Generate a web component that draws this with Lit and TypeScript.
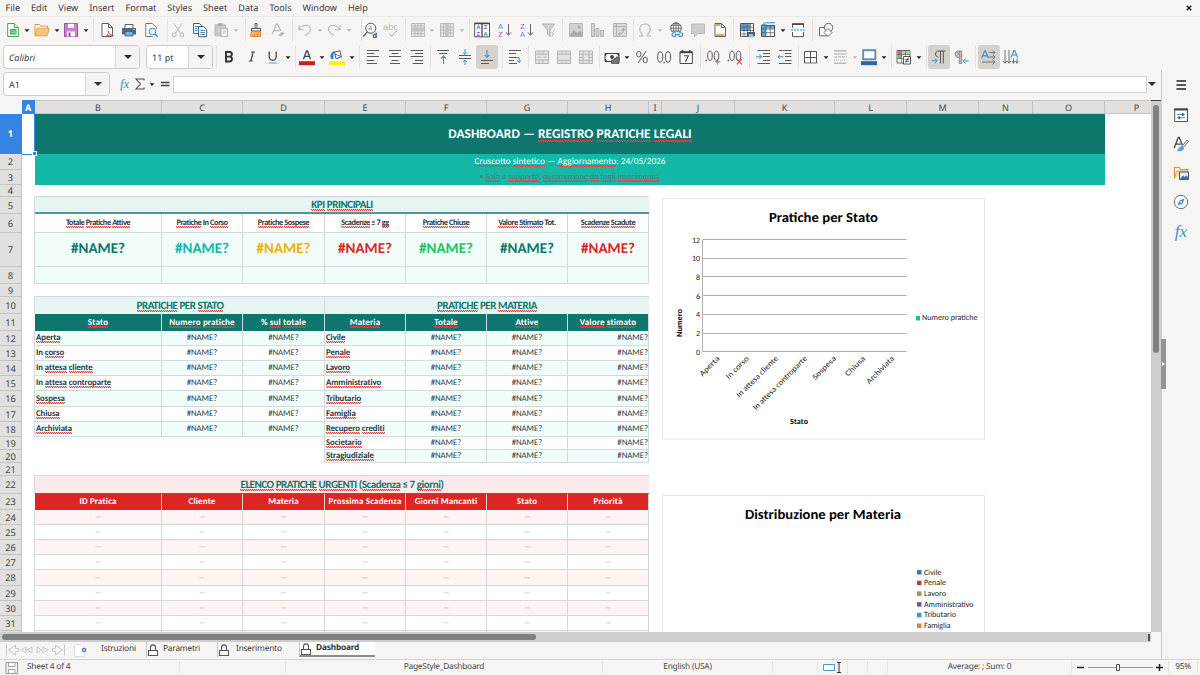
import { html, svg, css, LitElement, TemplateResult } from 'lit';
import { customElement, property } from 'lit/decorators.js';
import { classMap } from 'lit/directives/class-map.js';

const INK = '#5a5a5a';
const DIM = '#b9b9b9';
const BLUE = '#3b8fd1';

// All icons are drawn on a 16x16 box
const ICONS: Record<string, unknown> = {
  caret: svg`<path d="M5.6 7.2h4.8L8 10z" fill="#222"/>`,
  caretdim: svg`<path d="M5.8 7.2h4.4L8 9.8z" fill="#b5b5b5"/>`,
  new: svg`<path d="M2.7 1.5h6.6l4 4v9H2.7z" fill="#fff" stroke="#3fa65c"/><path d="M9.3 1.5v4h4" fill="#d6f0dc" stroke="#3fa65c"/><path d="M5 7h6.5v5.5H5z" fill="#3fa65c"/><path d="M5.5 9h5.5M5.5 10.8h5.5" stroke="#dff3e4" stroke-width=".7"/>`,
  open: svg`<path d="M1 13.5v-11h4.5l1.3 1.6h6.7v2" fill="#fff" stroke="#e0973b"/><path d="M3 6.2h12.3l-2 7.6H1z" fill="#f9c581" stroke="#e9a04a"/>`,
  save: svg`<path d="M1.5 1.5h13v13h-13z" fill="#c983cf" stroke="#a04fb0"/><path d="M4.5 1.5h7v5h-7z" fill="#fff" stroke="#a04fb0" stroke-width=".6"/><path d="M4 9.5h8v5H4z" fill="#fff"/><path d="M5.5 10.5h2v4h-2z" fill="#8d4a99"/>`,
  pdf: svg`<path d="M3 1.5h6.5l4 4v9H3z" fill="#fff" stroke="#5f5f5f"/><path d="M9.5 1.5v4h4" fill="none" stroke="#5f5f5f"/><path d="M6.5 15c2.6-2 3.4-4.5 2.9-6.2M9 9c.6 2.6 2.4 4.2 5.6 4.4M6.5 14.8c2-1.6 5-2 8-1.3" fill="none" stroke="#e0484a" stroke-width=".9"/>`,
  print: svg`<path d="M4 2.5h8v4H4z" fill="#fff" stroke="#5f5f5f"/><path d="M1 6h14v6.5H1z" fill="#5b6770"/><path d="M4 9.5h8v4.5H4z" fill="#65b5ea" stroke="#3a5f78" stroke-width=".8"/><path d="M12.5 7.5h1.2" stroke="#fff"/>`,
  preview: svg`<path d="M13.3 7V5.5l-4-4H2.8v13h7" fill="#fff" stroke="#777"/><circle cx="9.5" cy="9.5" r="3.4" fill="#dff0fb" stroke="${BLUE}"/><path d="M12 12l2.7 2.7" stroke="${BLUE}" stroke-width="1.5"/>`,
  cut: svg`<path d="M4 1.5l6.6 10M12 1.5l-6.6 10" stroke="${DIM}" fill="none"/><circle cx="4.2" cy="12.8" r="1.9" fill="none" stroke="${DIM}"/><circle cx="11.8" cy="12.8" r="1.9" fill="none" stroke="${DIM}"/>`,
  copy: svg`<path d="M1.6 1.5h6l2 2v8h-8z" fill="#fff" stroke="#555"/><path d="M6.6 4.5h5l3 3v7.2h-8z" fill="#fff" stroke="#555"/><path d="M3 4.5h3M3 6.5h2.5M3 8.5h2.5M8.3 8.5h4.5M8.3 10.5h4.5M8.3 12.5h4.5" stroke="${BLUE}"/>`,
  paste: svg`<path d="M2 2.8h10.5v11H2z" fill="#c9c9c9" stroke="#b5b5b5"/><path d="M5 1.2h4.5v2.6H5z" fill="#aaa"/><path d="M8 6.5h6.5v8H8z" fill="#f6f6f6" stroke="#b5b5b5"/><path d="M9.3 9h4M9.3 11h4" stroke="#c5c5c5"/>`,
  brush: svg`<path d="M7 1.5h2v5H7z" fill="#fff" stroke="#555"/><path d="M3.5 6.5h9V9h-9z" fill="#fff" stroke="#555"/><path d="M3.5 9.5h9v5h-10z" fill="#f6b26b" stroke="#e0883a"/><path d="M6.5 12v2.5M9.5 12v2.5" stroke="#c9702a" stroke-width=".7"/>`,
  clear: svg`<path d="M2 12.5L6.5 2h1L11 9M3.8 8.7h6" fill="none" stroke="${DIM}" stroke-width="1.2"/><path d="M8 13.5l4.2-4 2.3 2-3.8 3z" fill="#b8b8b8"/>`,
  undo: svg`<path d="M2 3.2v4.6h4.8M2.2 7.5C4.5 3.4 9.5 2 12.3 4.6c2.6 2.6.8 6.2-4.3 9" fill="none" stroke="${DIM}" stroke-width="1.1"/>`,
  redo: svg`<path d="M14 3.2v4.6H9.2M13.8 7.5C11.5 3.4 6.5 2 3.7 4.6c-2.6 2.6-.8 6.2 4.3 9" fill="none" stroke="${DIM}" stroke-width="1.1"/>`,
  find: svg`<circle cx="8.8" cy="6.2" r="5" fill="#fff" stroke="#555"/><path d="M5.3 9.8L1.2 14.6" stroke="#555" stroke-width="1.3"/><text x="6.2" y="8.2" font-size="7" fill="${BLUE}">a</text><text x="10.4" y="15.8" font-size="7.5" fill="#333" font-weight="600">d</text>`,
  spell: svg`<text x="0" y="8" font-size="9" fill="${DIM}" textLength="15">abc</text><path d="M6.5 11.8l2.3 2.4L14 8.6" fill="none" stroke="${DIM}" stroke-width="1.1"/>`,
  rowi: svg`<path d="M1.5 1.5h13v13h-13z" fill="#e8e8e8" stroke="#bababa"/><path d="M1.5 4h13M1.5 11.5h13M5 1.5v13M8 1.5v13M11 1.5v13" stroke="#bababa"/><path d="M2 5.5h12v4H2z" fill="#c4c4c4"/>`,
  coli: svg`<path d="M1.5 1.5h13v13h-13z" fill="#e8e8e8" stroke="#bababa"/><path d="M1.5 5h13M1.5 8h13M1.5 11h13M4.5 1.5v13M11.5 1.5v13" stroke="#bababa"/><path d="M6 2h4v12H6z" fill="#c4c4c4"/>`,
  sort: svg`<path d="M.7 1h14.8v13.8H.7z" fill="#fff" stroke="#555"/><path d="M.5 1.6h15M8 1v14" stroke="#444" stroke-width="1.3"/><g font-size="5.8" font-weight="700"><text x="2.2" y="7.4" fill="${BLUE}">A</text><text x="2.4" y="14.2" fill="#a24fb5">Z</text><text x="9.8" y="7.4" fill="#a24fb5">Z</text><text x="9.6" y="14.2" fill="${BLUE}">A</text></g>`,
  asc: svg`<g font-size="7.2"><text x="1" y="6.600" fill="${BLUE}">A</text><text x="1.200" y="15.200" fill="#a24fb5">Z</text></g><path d="M11.500 2v11M9 10.300l2.500 3 2.500-3" fill="none" stroke="#666"/>`,
  desc: svg`<g font-size="7.200"><text x="1.200" y="6.600" fill="#a24fb5">Z</text><text x="1" y="15.200" fill="${BLUE}">A</text></g><path d="M11.500 2v11M9 10.300l2.500 3 2.500-3" fill="none" stroke="#666"/>`,
  filter: svg`<path d="M1.2 2h12.6L9.2 8v6.5L6.5 12V8z" fill="#cfcfcf" stroke="#b5b5b5"/><path d="M14 7l-3.2 4.2h2L11 14.6" stroke="#bbb" fill="none"/>`,
  image: svg`<path d="M1.5 1.5h13v13h-13z" fill="#d3d3d3" stroke="#b5b5b5"/><path d="M2 13l4-5 3 3 3-2.5L14 11v3H2z" fill="#aaa"/><circle cx="11" cy="5" r="1.4" fill="#aaa"/>`,
  chart: svg`<path d="M2.5 1.5h3v13h-3zM7 6.5h3v8H7zM11.5 8.5h3v6h-3z" fill="#d3d3d3" stroke="#b5b5b5"/>`,
  pivot: svg`<path d="M1.5 1.5h13v13h-13z" fill="#dadada" stroke="#b5b5b5"/><path d="M1.5 4.5h13M4.5 1.5v13" stroke="#b5b5b5"/><path d="M6.5 12c4 0 5-2 5-5M9.5 8.5l2-2 2 2M8.3 10l-2 2 2 2" fill="none" stroke="#a5a5a5"/>`,
  omega: svg`<path d="M2 14h3.8c-.2-1.8-3-3.2-3-6.6C2.8 4 5 2 8 2s5.2 2 5.2 5.4c0 3.4-2.8 4.8-3 6.6H14" fill="none" stroke="#b5b5b5" stroke-width="1.1"/>`,
  link: svg`<circle cx="8" cy="6.2" r="5.3" fill="#fff" stroke="#555"/><path d="M2.7 6.2h10.6M8 1v10M3.7 3.3h8.6M3.7 9h8.6" stroke="#555" stroke-width=".8"/><ellipse cx="8" cy="6.2" rx="2.6" ry="5.3" fill="none" stroke="#555" stroke-width=".8"/><path d="M3 10h11v5H3z" fill="#f6f5f4"/><path d="M8 10.8H5.8a1.8 1.8 0 000 3.6H8M10.6 10.8h2.4a1.8 1.8 0 010 3.6h-2.4M6.8 12.6h5" fill="none" stroke="${BLUE}" stroke-width="1.1"/>`,
  comment: svg`<path d="M1.5 2h13v9.5H8l-3.5 3v-3h-3z" fill="#cdcdcd" stroke="#b9b9b9"/>`,
  headers: svg`<path d="M3 1.5h6.5l4 4v9H3z" fill="#fff" stroke="#666"/><path d="M9.5 1.5v4h4" fill="none" stroke="#666"/><path d="M4 3h4.5M4 13h8.5" stroke="#eda247" stroke-width="2"/>`,
  printarea: svg`<path d="M1.5 1.5h13v13h-13z" fill="#fff" stroke="#555"/><path d="M2 2h9v7H2z" fill="#58a7de"/><path d="M1.5 5h13M1.5 8.5h13M1.5 12h13M5 1.5v13M8.3 1.5v13M11.5 1.5v13" stroke="#555" stroke-width=".7"/><path d="M8 10h8v4H8z" fill="#4f5b64"/><path d="M9.8 12h4.4v3.3H9.8z" fill="#8ac8f0"/>`,
  freeze: svg`<path d="M1.5 3.5h13v11h-13z" fill="#fff" stroke="#555"/><path d="M2 4h12v2.5H2zM2 4h4v10H2z" fill="#58a7de"/><path d="M1.5 7h13M1.5 10.7h13M6 3v11.5M10.3 3v11.5" stroke="#555" stroke-width=".7"/><path d="M4 .3v5M1.3 2.8h5.2M5 .8h10" stroke="${BLUE}" stroke-width="1"/>`,
  split: svg`<path d="M2.5 5.8V1.8h11v4M2.5 10v4.6h11V10" fill="#fff" stroke="#555"/><path d="M2 2.2h12" stroke="#444" stroke-width="1.5"/><path d="M1 8h14" stroke="${BLUE}" stroke-dasharray="2 1"/>`,
  shapes: svg`<path d="M1.5 5.5h8v8.3h-8z" fill="#fff" stroke="#666"/><circle cx="10.5" cy="5.6" r="4.2" fill="#f6f5f4" stroke="#666"/><path d="M10 6.5l4 4-4 4-4-4z" fill="#fff" stroke="#666"/>`,
  bold: svg`<path d="M5 3h3.600a2.300 2.300 0 010 4.600H5zM5 7.600h4a2.500 2.500 0 010 4.900H5z" fill="none" stroke="#333" stroke-width="1.900"/>`,
  italic: svg`<path d="M7 3h4M4.8 12h4M9.2 3L6.8 12" stroke="#444" stroke-width="1.2" fill="none"/>`,
  underline: svg`<path d="M4.2 2.5v5.3c0 4.6 7 4.6 7 0V2.5" stroke="#4d4d4d" stroke-width="1.3" fill="none"/><path d="M3.5 14h8.8" stroke="#6db1e3" stroke-width="1.2"/>`,
  fontcolor: svg`<path d="M4.500 10.300L7.500 2h1l3 8.300M5.600 7.300h4.800" fill="none" stroke="#444" stroke-width="1.300"/><path d="M0 12.2h16v4H0z" fill="#c5221b"/>`,
  hilite: svg`<path d="M0 12.2h16v4H0z" fill="#fff200"/><path d="M5.5 3.2l5.5-1.5 1.3 6-5.2 2.2z" fill="#fff" stroke="#555"/><path d="M6 5l7 3" stroke="#555" stroke-width=".8"/><path d="M2.6 9.5c-1-3 .2-6 3-6.5M3.5 10V4" stroke="#2a7fc4" stroke-width="1.8" fill="none"/>`,
  left: svg`<path d="M1.8 1.5H14M1.8 4.500h7.5M1.8 7.500H14M1.8 11.500h7.5M1.8 14.5H12" stroke="${INK}"/>`,
  center: svg`<path d="M2 1.5h12M4.5 4.500h7M2 7.500h12M4.5 11.500h7M3 14.5h10" stroke="${INK}"/>`,
  right: svg`<path d="M1.5 1.5H14M6 4.500h8M1.5 7.500H14M6 11.500h8M3.5 14.5H14" stroke="${INK}"/>`,
  top: svg`<path d="M2 1.5h12M4 4.5h8" stroke="${INK}"/><path d="M8.5 15V7M6 9.5L8.5 7 11 9.5" stroke="${BLUE}" fill="none" stroke-width="1.1"/>`,
  middle: svg`<path d="M2 6.500h12M2 9.5h12" stroke="${INK}"/><path d="M8 0v5.3M5.8 3.2L8 5.4l2.2-2.2M8 16v-5M5.8 13L8 10.9l2.2 2.1" stroke="${BLUE}" fill="none"/>`,
  bottom: svg`<path d="M2 11.5h12M2 14.5h8" stroke="${INK}"/><path d="M8 1v7M5.6 5.8L8 8.2l2.4-2.4" stroke="${BLUE}" fill="none" stroke-width="1.1"/>`,
  wrap: svg`<path d="M2 1.500h12M2 4.500h7M2 8.500h8.5M2 11.500h5M2 14.500h8" stroke="${INK}"/><path d="M8.5 8.6h3.6v4.6M10 11.3l2.1 2.2 2.3-2.2" stroke="${BLUE}" fill="none"/>`,
  merge1: svg`<path d="M1.5 2h13v12.5h-13z" fill="#e4e4e4" stroke="#b5b5b5"/><path d="M1.5 5.2h13M1.5 11h13M5 2v3M9 2v3M5 11v3.5M9 11v3.5M3.5 8.2h3.2M9.5 8.2h3.2" stroke="#b5b5b5"/>`,
  merge2: svg`<path d="M1.5 2h13v12.5h-13z" fill="#e4e4e4" stroke="#b5b5b5"/><path d="M1.5 5.2h13M1.5 11.3h13M6 2v3M10 2v3M6 11v3.5M10 11v3.5" stroke="#b5b5b5"/>`,
  merge3: svg`<path d="M1.5 2h13v12.5h-13z" fill="#e4e4e4" stroke="#b5b5b5"/><path d="M1.5 5.2h13M1.5 8.5h3.5M11 8.5h3.5M1.5 11.5h13M5 2v12.5M11 2v12.5" stroke="#b5b5b5"/>`,
  currency: svg`<path d="M1 4.5h14v8H1z" fill="#fff" stroke="#444"/><path d="M1 4.5h3l-3 3zM15 4.5v3l-3-3zM1 9.5v3h3z" fill="#444"/><circle cx="8" cy="8" r="2" fill="#444"/><path d="M7.5 11h2.5V9.5H12V8h3v6.5H7.5z" fill="#777" stroke="#444" stroke-width=".7"/>`,
  percent: svg`<ellipse cx="4.8" cy="5.2" rx="2.2" ry="2.8" fill="none" stroke="${INK}"/><ellipse cx="11.2" cy="11" rx="2.2" ry="2.8" fill="none" stroke="${INK}"/><path d="M12 2.2L4 14" stroke="${INK}"/>`,
  number: svg`<ellipse cx="4.2" cy="8" rx="2.6" ry="5.2" fill="none" stroke="${INK}"/><ellipse cx="12" cy="8" rx="2.6" ry="5.2" fill="none" stroke="${INK}"/><path d="M7.5 13.6h1.3" stroke="${INK}" stroke-width="1.3"/>`,
  date: svg`<path d="M2 2.8h12.3v11.7H2z" fill="#fff" stroke="#444"/><path d="M2 3.4h12.3M4.5 1v3M11.8 1v3" stroke="#444" stroke-width="1.6"/><path d="M5.8 6.7h4.6L7.4 13" stroke="#444" fill="none" stroke-width="1.1"/>`,
  adddec: svg`<ellipse cx="5" cy="6.8" rx="2.3" ry="4.7" fill="none" stroke="${INK}"/><ellipse cx="11.5" cy="6.8" rx="2.3" ry="4.7" fill="none" stroke="${INK}"/><path d="M.7 11.5h1.3" stroke="${INK}" stroke-width="1.3"/><path d="M12.5 10v5.5M9.8 12.8h5.4" stroke="${BLUE}" stroke-width="1.1"/>`,
  deldec: svg`<ellipse cx="5" cy="6.8" rx="2.3" ry="4.7" fill="none" stroke="${INK}"/><ellipse cx="11.5" cy="6.8" rx="2.3" ry="4.7" fill="none" stroke="${INK}"/><path d="M.7 11.5h1.3" stroke="${INK}" stroke-width="1.3"/><path d="M9.8 10.2l5.2 5.2M15 10.2l-5.2 5.2" stroke="#e0484a" stroke-width="1.1"/>`,
  indent: svg`<path d="M2.5 1.500H15M8 4.5h7M8 7.500h7M8 11.500h7M2.5 14.500H15" stroke="${INK}"/><path d="M1 7.8h5.5M4.3 5.6l2.3 2.2L4.3 10" stroke="${BLUE}" fill="none"/>`,
  outdent: svg`<path d="M2 1.500h12.5M8 4.5h6.5M8 7.500h6.5M8 11.500h6.5M2 14.500h12.5" stroke="${INK}"/><path d="M.8 7.8H6.5M3 5.6L.8 7.8 3 10" stroke="${BLUE}" fill="none"/>`,
  border: svg`<path d="M2.5 2.5h12v11.5h-12z" fill="#fff" stroke="#555"/><path d="M8.5 2.5v11.500M2.5 8.500h12" stroke="#555"/><path d="M2 14.500h13" stroke="#edb15f"/>`,
  linestyle: svg`<path d="M2 1.800h12.500M2 5h12.500" stroke="#aaa" stroke-width="1.200"/><path d="M2 8h12.500" stroke="#aaa" stroke-width="1.200" stroke-dasharray="3 1"/><path d="M2 11.200h12.500" stroke="#aaa" stroke-dasharray="1 1"/><path d="M2 14.200h12.500" stroke="#bbb" stroke-width="1.500"/>`,
  bordercolor: svg`<path d="M2.500 1.500h11.500v8.500H2.500z" fill="#fff" stroke="#58a7de" stroke-width="1.400"/><path d="M1.800 .8h13v10h-13z" fill="none" stroke="#555" stroke-width=".7"/><path d="M0 12.200h16v4H0z" fill="#2b66a4"/>`,
  cond: svg`<path d="M1 1.500h13v12.500H1z" fill="#fff" stroke="#666"/><path d="M1.500 2h4v4h-4z" fill="#e06464"/><path d="M1.500 6h4v4h-4z" fill="#6abf6e"/><path d="M5.500 2h8v4h-8z" fill="#9edba1"/><path d="M1 5.500h13M1 9.500h13M5.500 1.500v12.500M9.500 1.500v12.500" stroke="#666" stroke-width=".7"/><path d="M7.500 7.500h7v7.500h-7z" fill="#fff" stroke="#555"/><path d="M9 10.300h4M9 12.300h4M12.300 8.800l-2.500 5" stroke="#444" stroke-width=".8"/>`,
  ltr: svg`<path d="M7.500 8C3.500 8 3.500 2 7.500 2H14.500M9.500 2v12.500M12.300 2v12.500" stroke="#555" fill="none"/><path d="M.8 11.800h5M3.800 9.500l2.300 2.300-2.300 2.300" stroke="${BLUE}" fill="none"/>`,
  rtl: svg`<path d="M5.500 8.500C1 8.500 1 2 5.500 2h3.200v12.500H6.300V2" fill="#bbb" stroke="#777" stroke-width=".8"/><path d="M15.500 12h-5M12.500 9.700L10.200 12l2.300 2.300" stroke="${BLUE}" fill="none"/>`,
  ttb: svg`<path d="M.6 9.300L3.700 1.800h.7l3.100 7.500M1.800 6.800h4.500" fill="none" stroke="${BLUE}" stroke-width="1.200"/><path d="M8.300 3.500h5.500M8.300 8h5.500M1 13h13M12 1.500l2 2-2 2M12 6l2 2-2 2M11.500 10.500l2.500 2.500-2.500 2.500" stroke="#666" stroke-width=".9" fill="none"/>`,
  vert: svg`<path d="M2 1v13M6 1v13M10.500 9.500v4.500M.2 12l1.800 2.300L3.800 12M4.200 12L6 14.300 7.800 12M9 12l1.500 2.300 1.500-2.300M14 9.500v4.500M12.500 12l1.500 2.300 1.500-2.300" stroke="#666" stroke-width=".9" fill="none"/><path d="M8 8.500L11 1.500h.7l3 7M9 6h4.500" fill="none" stroke="${BLUE}" stroke-width="1.200"/>`,
  menu: svg`<path d="M3.500 4h9.500M3.500 8h9.500M3.500 12h9.500" stroke="#222" stroke-width="1.400"/>`,
  props: svg`<path d="M1.700 2h12.800v12.500H1.700z" fill="#fff" stroke="#555"/><path d="M1.200 2.500h13.800" stroke="#444" stroke-width="2"/><path d="M4 7.500h8M4 10.800h8" stroke="${BLUE}"/><path d="M9.800 6v3M6.200 9.300v3" stroke="#444" stroke-width="1.300"/>`,
  styles: svg`<path d="M1.200 12L5.300 1.500h1L9.300 9M2.800 8.200h5" fill="none" stroke="#444" stroke-width="1.300"/><path d="M9 10.500l5-6.500 1.500 1.300-5 6z" fill="#fff" stroke="#555" stroke-width=".8"/><path d="M4.500 14.500c1-1 1.500-3.500 4-4 2 1 2.500 2.300 1 3.500-1.500 1-3.500 1-5 .5z" fill="#58a7de" stroke="#2a7fc4" stroke-width=".6"/>`,
  gallery: svg`<path d="M1.500 13.500v-11h4.800l1.400 2h7v3" fill="#fff" stroke="#e28a2d" stroke-width="1.200"/><path d="M1.500 13.500l2-7.500h11" fill="#fbd9ad" stroke="#e9a04a"/><path d="M6.500 7h9v7.500h-9z" fill="#dceefa" stroke="#555"/><path d="M7 14l3-3.500 2 1.500 1.500-1.500L15 12v2z" fill="#3178b4"/>`,
  compass: svg`<circle cx="8" cy="8" r="6.700" fill="#fff" stroke="#5c6f7c"/><path d="M11.500 4.500l-2 5.200-5 1.800 2-5z" fill="${BLUE}"/><circle cx="8" cy="8" r=".9" fill="#fff"/>`,
  sum: svg`<path d="M12 4.500V3H4l4.500 5L4 13h8v-1.500" fill="none" stroke="#4d4d4d" stroke-width="1.100"/>`,
  equals: svg`<path d="M4 6.500h8.500M4 9.500h8.500" stroke="#444" stroke-width="1.300"/>`,
  lock: svg`<path d="M3.500 8.500h9v5h-9z" fill="#fff" stroke="#555" stroke-width="1.100"/><path d="M5.500 8.500V5.500c0-3.500 5-3.500 5 0v3" fill="none" stroke="#555" stroke-width="1.100"/>`,
  addsheet: svg`<path d="M1.500 2.500h7l3 3v9h-10z" fill="#fff" stroke="#ddd"/><circle cx="11" cy="8" r="2.300" fill="#3b6fc0"/><path d="M11 6.700v2.600M9.700 8h2.600" stroke="#fff" stroke-width=".8"/>`,
  disk: svg`<path d="M2 2.500h11.500v11H2z" fill="#f6f5f4" stroke="#999"/><path d="M4.500 2.500h6.500v4H4.500zM4.500 9.500h6.500v4H4.500z" fill="#fff" stroke="#999" stroke-width=".9"/>`,
};

@customElement('calc-icon')
export class CalcIcon extends LitElement {
  @property() name = '';

  static styles = css`
    :host {
      display: inline-block;
      flex: none;
      width: 16px;
      height: 16px;
    }
    svg {
      display: block;
      overflow: visible;
      font-family: 'Liberation Sans', sans-serif;
    }
  `;

  render() {
    return html`<svg width="16" height="16" viewBox="0 0 16 16">${ICONS[this.name]}</svg>`;
  }
}

// [icon, advance to the next item]; '|' is a separator, '*' marks a pressed button
type Tool = [string, number];

const STANDARD: Tool[] = [
  ['new', 18], ['caret', 11], ['open', 19], ['caret', 10], ['save', 19], ['caret', 11], ['|', 6],
  ['pdf', 22], ['print', 22], ['preview', 24], ['|', 3],
  ['cut', 22], ['copy', 21], ['paste', 19], ['caretdim', 13], ['|', 3],
  ['brush', 22], ['clear', 22], ['|', 5],
  ['undo', 19], ['caretdim', 10], ['redo', 19], ['caretdim', 16], ['|', 1],
  ['find', 21], ['spell', 22], ['|', 5],
  ['rowi', 18], ['caretdim', 11], ['coli', 19], ['caretdim', 11], ['|', 5],
  ['sort', 23], ['asc', 22], ['desc', 22], ['filter', 21], ['|', 6],
  ['image', 21], ['chart', 23], ['pivot', 21], ['|', 4],
  ['omega', 19], ['caretdim', 12], ['link', 22], ['comment', 22], ['headers', 21], ['|', 6],
  ['printarea', 21], ['freeze', 19], ['caret', 11], ['split', 22], ['|', 6],
  ['shapes', 20],
];

const FORMATTING: Tool[] = [
  ['|', 5], ['bold', 23], ['italic', 21], ['underline', 19], ['caret', 11], ['|', 4],
  ['fontcolor', 19], ['caret', 11], ['hilite', 19], ['caret', 11], ['|', 6],
  ['left', 22], ['center', 22], ['right', 21], ['|', 5],
  ['top', 22], ['middle', 22], ['*bottom', 23], ['|', 5],
  ['wrap', 21], ['|', 6],
  ['merge1', 22], ['merge2', 22], ['merge3', 21], ['|', 5],
  ['currency', 19], ['caret', 11], ['percent', 22], ['number', 22], ['date', 22], ['|', 5],
  ['adddec', 22], ['deldec', 22], ['|', 6],
  ['indent', 22], ['outdent', 21], ['|', 4],
  ['border', 20], ['caret', 10], ['linestyle', 19], ['caretdim', 10], ['bordercolor', 19], ['caret', 11], ['|', 5],
  ['cond', 19], ['caret', 11], ['|', 5],
  ['*ltr', 22], ['rtl', 22], ['|', 6],
  ['*ttb', 22], ['vert', 20],
];

@customElement('calc-tools')
export class CalcTools extends LitElement {
  @property({ attribute: false }) items: Tool[] = [];

  static styles = css`
    :host {
      display: flex;
      align-items: center;
    }
    .slot {
      flex: none;
      display: flex;
      height: 16px;
    }
    .small calc-icon {
      margin: 0 -4px;
    }
    .sep::before {
      content: '';
      width: 1px;
      height: 22px;
      margin-top: -3px;
      background: #e3e2e0;
    }
    .on calc-icon {
      margin: -4px -3px;
      padding: 4px 3px;
      border-radius: 3px;
      background: #d5d2ce;
    }
  `;

  render() {
    return this.items.map(([name, w]) => {
      const sep = name === '|';
      const on = name.startsWith('*');
      const cls = { slot: true, sep, on, small: name.startsWith('caret') };
      return html`<div class=${classMap(cls)} style="width:${w}px">
        ${sep ? '' : html`<calc-icon name=${on ? name.slice(1) : name}></calc-icon>`}
      </div>`;
    });
  }
}

const COLS: [string, number][] = [
  ['A', 13], ['B', 127], ['C', 81], ['D', 82], ['E', 81], ['F', 81], ['G', 81], ['H', 81], ['I', 13],
  ['J', 73], ['K', 100], ['L', 72], ['M', 72], ['N', 54], ['O', 72], ['P', 64],
];
const ROWS = [
  40, 16, 15, 12, 17, 19, 34, 17, 13, 17, 17, 15, 15, 15, 15, 16, 15, 15, 13, 13, 13, 18, 16,
  15, 15, 15, 15, 16, 15, 15, 15, 15,
];

interface Cell {
  c: number;
  r: number;
  span?: number;
  cls: string;
  text: string;
}

const NAME = '#NAME?';
const STATES = ['~Aperta~', 'In ~corso~', 'In ~attesa~ ~cliente~', 'In ~attesa~ ~controparte~', '~Sospesa~', '~Chiusa~', '~Archiviata~'];
const SUBJECTS = ['~Civile~', '~Penale~', '~Lavoro~', '~Amministrativo~', '~Tributario~', '~Famiglia~', '~Recupero~ ~crediti~', '~Societario~', '~Stragiudiziale~'];
const KPIS: [string, string][] = [
  ['~Totale~ ~Pratiche~ ~Attive~', 'c1'],
  ['~Pratiche~ In ~Corso~', 'c2'],
  ['~Pratiche~ ~Sospese~', 'c3'],
  ['~Scadenze~ ≤ 7 ~gg~', 'c4'],
  ['~Pratiche~ ~Chiuse~', 'c5'],
  ['~Valore~ ~Stimato~ Tot.', 'c1'],
  ['~Scadenze~ ~Scadute~', 'c4'],
];

function buildCells(): Cell[] {
  const cells: Cell[] = [
    { c: 2, r: 1, span: 14, cls: 'title', text: 'DASHBOARD — ~REGISTRO~ ~PRATICHE~ ~LEGALI~' },
    { c: 2, r: 2, span: 14, cls: 'sub', text: '~Cruscotto~ ~sintetico~ — ~Aggiornamento~: 24/05/2026' },
    { c: 2, r: 3, span: 14, cls: 'sub note', text: '• ~Solo~ a ~supporto~, ~automazione~ ~da~ ~fogli~ ~Inserimento~.' },
    { c: 2, r: 5, span: 7, cls: 'section line', text: '~KPI~ ~PRINCIPALI~' },
    { c: 2, r: 10, span: 3, cls: 'section edge', text: '~PRATICHE~ PER ~STATO~' },
    { c: 5, r: 10, span: 4, cls: 'section', text: '~PRATICHE~ PER ~MATERIA~' },
    { c: 2, r: 22, span: 7, cls: 'section urgent', text: '~ELENCO~ ~PRATICHE~ ~URGENTI~ (~Scadenza~ ≤ 7 ~giorni~)' },
  ];
  KPIS.forEach(([label, color], i) => {
    const first = i === 0 ? ' first' : '';
    cells.push({ c: 2 + i, r: 6, cls: 'kpi' + first, text: label });
    cells.push({ c: 2 + i, r: 7, cls: 'big even ' + color + first, text: NAME });
    cells.push({ c: 2 + i, r: 8, cls: 'even' + first, text: '' });
  });
  ['~Stato~', '~Numero~ ~pratiche~', '% ~sul~ ~totale~', '~Materia~', '~Totale~', '~Attive~', '~Valore~ ~stimato~'].forEach((text, i) =>
    cells.push({ c: 2 + i, r: 11, cls: 'head', text }));
  ['ID Pratica', 'Cliente', 'Materia', 'Prossima Scadenza', 'Giorni Mancanti', 'Stato', 'Priorità'].forEach((text, i) =>
    cells.push({ c: 2 + i, r: 23, cls: 'head red', text }));
  STATES.forEach((text, i) => {
    const even = i % 2 ? '' : ' even';
    cells.push({ c: 2, r: 12 + i, cls: 'label first' + even, text });
    cells.push({ c: 3, r: 12 + i, cls: 'value' + even, text: NAME });
    cells.push({ c: 4, r: 12 + i, cls: 'value' + even, text: NAME });
  });
  SUBJECTS.forEach((text, i) => {
    const even = i % 2 ? '' : ' even';
    cells.push({ c: 5, r: 12 + i, cls: 'label' + (i > 6 ? ' first' : '') + even, text });
    cells.push({ c: 6, r: 12 + i, cls: 'value' + even, text: NAME });
    cells.push({ c: 7, r: 12 + i, cls: 'value' + even, text: NAME });
    cells.push({ c: 8, r: 12 + i, cls: 'value end' + even, text: NAME });
  });
  for (let r = 24; r <= 32; r++) {
    for (let c = 2; c <= 8; c++) {
      cells.push({ c, r, cls: 'dash' + (r % 2 ? '' : ' rose') + (c === 2 ? ' first' : ''), text: r < 32 ? '—' : '' });
    }
  }
  return cells;
}

@customElement('calc-sheet')
export class CalcSheet extends LitElement {
  private cells = buildCells();

  static styles = css`
    :host {
      display: grid;
      grid-template: 14px 518px / 22px 1129px;
      overflow: hidden;
      background: #fff;
      font-family: 'Noto Sans', sans-serif;
      font-size: 9px;
      color: #444;
      text-rendering: geometricPrecision;
    }
    .corner {
      background: #f6f5f4;
    }
    .cols,
    .rows {
      display: flex;
      overflow: hidden;
      background: #e1e0df;
    }
    .rows {
      flex-direction: column;
    }
    .cols div,
    .rows div {
      flex: none;
      display: flex;
      align-items: center;
      justify-content: center;
      box-sizing: border-box;
      border: 0 solid #c4c3c1;
      line-height: 1;
    }
    .cols div {
      border-width: 1px 1px 1px 0;
    }
    .rows div {
      border-width: 0 1px 1px 0;
      font-size: 9.3px;
      padding-top: 1px;
    }
    .cols div.sel,
    .rows div.sel {
      background: #3584e4;
      border-color: #3584e4;
      color: #fff;
      font-weight: 700;
    }
    .view {
      position: relative;
      overflow: hidden;
    }
    .grid {
      display: grid;
      font-family: Carlito, Lato, sans-serif;
    }
    .cell {
      display: flex;
      align-items: center;
      justify-content: center;
      box-sizing: border-box;
      min-width: 0;
      border: 0 solid #d3d9dc;
      border-width: 0 1px 1px 0;
      white-space: pre;
      line-height: 1;
      color: #2b3a42;
    }
    .first {
      box-shadow: -1px 0 #d3d9dc;
    }
    .bad {
      background:
        repeating-linear-gradient(90deg, #df4644 0 1px, #df464455 1px 2px) 0 calc(100% - 1px) / 100% 1px no-repeat,
        repeating-linear-gradient(90deg, #df464455 0 1px, #df4644 1px 2px) 0 100% / 100% 1px no-repeat;
    }
    .title {
      border: 0;
      background: #0f766e;
      color: #fff;
      font-size: 13.3px;
      font-weight: 700;
      letter-spacing: 0.06px;
    }
    .sub {
      border: 0;
      background: #14b8a6;
      color: #f0fdfa;
      font-size: 9.3px;
      padding-bottom: 1px;
    }
    .note {
      color: #4b7f80;
      font-size: 8.5px;
      font-style: italic;
      padding-bottom: 0;
    }
    .section {
      margin-top: -1px;
      background: #e6f5f3;
      color: #0f766e;
      border-width: 1px 0 0 0;
      font-size: 11px;
      font-weight: 700;
      letter-spacing: -0.44px;
      box-shadow: -1px 0 #d3d9dc;
    }
    .line {
      border-bottom: 2px solid #4b9a93;
    }
    .urgent {
      background: #fee9ea;
      border-bottom: 1px solid #47706c;
    }
    .kpi {
      font-size: 8.4px;
      font-weight: 600;
      letter-spacing: -0.45px;
    }
    .big {
      font-size: 15px;
      font-weight: 700;
      padding-bottom: 1px;
    }
    .c1 { color: #0f766e; }
    .c2 { color: #14b8a6; }
    .c3 { color: #eab308; }
    .c4 { color: #dc2626; }
    .c5 { color: #22c55e; }
    .head {
      background: #0f766e;
      color: #fff;
      font-size: 9px;
      font-weight: 700;
      letter-spacing: 0.15px;
      border-bottom: 0;
    }
    .red {
      background: #dc2626;
      padding-bottom: 1px;
    }
    .label {
      justify-content: flex-start;
      padding-left: 1px;
      padding-top: 1px;
      font-size: 8.8px;
      font-weight: 700;
      letter-spacing: -0.08px;
    }
    .value {
      padding-top: 1px;
      font-size: 8.7px;
    }
    .end {
      justify-content: flex-end;
    }
    .even {
      background: #f0fdfa;
    }
    .rose {
      background: #fef4f3;
    }
    .dash {
      color: #a6a6a6;
      font-size: 7.4px;
    }
    .cursor {
      position: absolute;
      left: 0;
      top: 0;
      width: 13px;
      height: 41px;
      box-sizing: border-box;
      border-right: 1px solid #3584e4;
      border-bottom: 1px solid #3584e4;
    }
    .cursor::after {
      content: '';
      position: absolute;
      right: -3px;
      bottom: -2px;
      width: 3px;
      height: 3px;
      border: 1px solid #fff;
      background: #3584e4;
    }
    .charts {
      position: absolute;
      left: 640px;
      top: 84px;
      display: flex;
      flex-direction: column;
      gap: 55px;
    }
    svg {
      display: block;
      font-family: Carlito, Lato, sans-serif;
      font-size: 8px;
      fill: #222;
    }
    .bold {
      font-weight: 700;
      fill: #000;
    }
    .big-title {
      font-size: 14px;
    }
  `;

  private spell(text: string): TemplateResult[] {
    return text.split('~').map((part, i) => (i % 2 ? html`<span class="bad">${part}</span>` : html`${part}`));
  }

  private renderBarChart() {
    const labels: [string, number][] = [
      ['Aperta', 25], ['In corso', 29], ['In attesa cliente', 55], ['In attesa controparte', 73],
      ['Sospesa', 30], ['Chiusa', 25], ['Archiviata', 36],
    ];
    return html`<svg width="323" height="242" viewBox="0 0 323 242">
      <rect x=".5" y=".5" width="322" height="240.500" fill="#fff" stroke="#e6e6e6" />
      <text class="bold big-title" x="107" y="24" textLength="109" lengthAdjust="spacingAndGlyphs">Pratiche per Stato</text>
      ${[12, 10, 8, 6, 4, 2, 0].map((n, i) => svg`
        <path d="M40.500 ${Math.round(42 + i * 18.7) - 0.5}H244.500" stroke="#b0b0b0"/>
        <text x="38" y="${44.500 + i * 18.7}" text-anchor="end">${n}</text>`)}
      <path d="M40.500 41.500v113" stroke="#b0b0b0" />
      ${labels.map(([name, len], i) => svg`
        <text transform="translate(${58.200 + i * 29.1} 161) rotate(-45)" x="${-len}" textLength="${len}" lengthAdjust="spacingAndGlyphs">${name}</text>`)}
      <text class="bold" x="128" y="226" textLength="18">Stato</text>
      <text class="bold" transform="translate(19.500 139) rotate(-90)" textLength="28" lengthAdjust="spacingAndGlyphs">Numero</text>
      <rect x="254" y="118" width="4" height="4.500" fill="#2bb3a0" />
      <text x="260" y="122" textLength="55.500" lengthAdjust="spacingAndGlyphs">Numero pratiche</text>
    </svg>`;
  }

  private renderPieChart() {
    const legend: [string, string, number][] = [
      ['Civile', '#4573a7', 17.5], ['Penale', '#aa4643', 22], ['Lavoro', '#89a54e', 22],
      ['Amministrativo', '#71588f', 49.5], ['Tributario', '#4198af', 32], ['Famiglia', '#db843d', 26.5],
    ];
    return html`<svg width="323" height="242" viewBox="0 0 323 242">
      <rect x=".5" y=".5" width="322" height="241" fill="#fff" stroke="#e6e6e6" />
      <text class="bold big-title" x="83" y="24" textLength="156" lengthAdjust="spacingAndGlyphs">Distribuzione per Materia</text>
      ${legend.map(([name, color, len], i) => svg`
        <rect x="255" y="${75 + i * 10.7}" width="4.500" height="4.500" fill="${color}"/>
        <text x="262" y="${79.500 + i * 10.7}" textLength="${len}" lengthAdjust="spacingAndGlyphs">${name}</text>`)}
    </svg>`;
  }

  render() {
    const columns = COLS.map(([, w]) => w + 'px').join(' ');
    const rows = ROWS.map(h => h + 'px').join(' ');
    return html`
      <div class="corner"></div>
      <div class="cols">
        ${COLS.map(([name, w], i) => html`<div class=${i === 0 ? 'sel' : ''} style="width:${w}px">${name}</div>`)}
      </div>
      <div class="rows">
        ${ROWS.map((h, i) => html`<div class=${i === 0 ? 'sel' : ''} style="height:${h}px">${i < 31 ? i + 1 : ''}</div>`)}
      </div>
      <div class="view">
        <div class="grid" style="grid-template-columns:${columns};grid-template-rows:${rows}">
          ${this.cells.map(c => html`<div
            class="cell ${c.cls}"
            style="grid-area:${c.r} / ${c.c} / auto / span ${c.span ?? 1}"
          ><div>${this.spell(c.text)}</div></div>`)}
        </div>
        <div class="charts">${this.renderBarChart()}${this.renderPieChart()}</div>
        <div class="cursor"></div>
      </div>
    `;
  }
}

@customElement('app-root')
export class AppRoot extends LitElement {
  static styles = css`
    :host {
      display: flex;
      flex-direction: column;
      width: 1200px;
      height: 675px;
      overflow: hidden;
      background: #f6f5f4;
      font-family: 'Noto Sans', sans-serif;
      font-size: 9px;
      line-height: 1;
      color: #3a3a3a;
      text-rendering: geometricPrecision;
    }
    .menu {
      display: flex;
      align-items: center;
      gap: 11px;
      height: 16px;
      padding: 0 8px 0 5.5px;
      border-bottom: 1px solid #eae9e7;
      font-size: 9.1px;
      white-space: nowrap;
    }
    .close {
      margin-left: auto;
      width: 6px;
      height: 6px;
    }
    .standard {
      height: 26px;
      margin-bottom: 1px;
      padding-left: 5px;
    }
    .formatting {
      display: flex;
      align-items: center;
      height: 26px;
      padding-left: 3px;
    }
    .combo {
      display: flex;
      align-items: center;
      box-sizing: border-box;
      height: 24px;
      border: 1px solid #cdcbc8;
      border-radius: 4px;
      background: #fff;
      overflow: hidden;
    }
    .combo span {
      flex: 1;
      padding-left: 5px;
    }
    .combo i {
      display: flex;
      align-items: center;
      justify-content: center;
      width: 23px;
      height: 100%;
      border-left: 1px solid #d8d6d3;
      background: #f5f4f2;
    }
    .combo i::before,
    .expand {
      content: '';
      border: 4px solid transparent;
      border-top-color: #2b2b2b;
      border-bottom: 0;
    }
    .family {
      width: 137px;
      margin-right: 6px;
      font-style: italic;
    }
    .size {
      width: 67px;
      margin-right: 3px;
    }
    .main {
      display: flex;
      height: 589px;
    }
    .doc {
      width: 1161px;
      display: flex;
      flex-direction: column;
    }
    .formula {
      display: flex;
      align-items: center;
      height: 30px;
      padding-left: 3px;
      box-sizing: border-box;
      padding-bottom: 2px;
    }
    .namebox {
      width: 107px;
      margin-right: 10px;
    }
    .fx {
      color: #3b8fd1;
      font: italic 13px 'Liberation Serif', serif;
    }
    .formula .fx {
      width: 10px;
      margin-right: 2px;
    }
    .formula calc-icon {
      margin-right: -1px;
    }
    .formula .drop {
      margin: 0 -3px 0 -3px;
    }
    .input {
      width: 974px;
      height: 17px;
      margin: 0 1px;
      border: 1px solid #d6d4d1;
      box-sizing: border-box;
      background: #fff;
    }
    .body {
      display: flex;
      height: 532px;
    }
    calc-sheet {
      width: 1151px;
    }
    .vscroll {
      width: 10px;
      background: #cdcdcd;
      border-top: 1px solid #444;
      box-sizing: border-box;
      padding: 4px 2px;
    }
    .vscroll div {
      height: 248px;
      border-radius: 3px;
      background: #808080;
    }
    .hscroll {
      display: flex;
      align-items: center;
      height: 10px;
      width: 1151px;
      box-sizing: border-box;
      padding: 0 1px 0 2px;
      background: #cdcdcd;
    }
    .hscroll div {
      width: 534px;
      height: 6px;
      border-radius: 3px;
      background: #7d807f;
    }
    .hscroll b {
      width: 2px;
      height: 7px;
      margin-left: auto;
      background: #555;
    }
    .tabs {
      display: flex;
      height: 16px;
      padding-left: 5px;
      font-size: 8.3px;
      letter-spacing: -0.18px;
    }
    .nav {
      width: 62px;
      margin-right: 6px;
    }
    .tab {
      display: flex;
      align-items: center;
      box-sizing: border-box;
      height: 15px;
      padding-left: 18px;
    }
    .tab.locked {
      padding-left: 0;
      border-left: 1px solid #c9c7c4;
    }
    .tab calc-icon {
      margin-right: -1px;
      margin-left: -2px;
    }
    .tab.active {
      background: #fff;
      border-bottom: 2px solid #8d8d8d;
      font-weight: 700;
      color: #333;
    }
    .side {
      position: relative;
      flex: 1;
      display: flex;
      flex-direction: column;
      align-items: center;
      gap: 13px;
      padding-top: 7px;
      border-left: 1px solid #cfcdca;
    }
    .side calc-icon:first-child {
      margin-bottom: 1px;
    }
    .side .fx {
      font-size: 17px;
      line-height: 17px;
    }
    .handle {
      position: absolute;
      left: -1px;
      top: 269px;
      width: 5px;
      height: 50px;
      background: #949494;
    }
    .handle::before {
      content: '';
      display: block;
      margin: 23px 0 0 1px;
      border: 2px solid transparent;
      border-left: 3px solid #fff;
      border-right: 0;
    }
    .status {
      display: flex;
      align-items: center;
      height: 15px;
      border-top: 1px solid #d6d4d1;
      font-size: 8.3px;
      letter-spacing: -0.22px;
      white-space: nowrap;
      color: #484848;
    }
    .field {
      display: flex;
      align-items: center;
      justify-content: center;
      box-sizing: border-box;
      height: 13px;
      border-right: 1px solid #e6e4e2;
    }
    .start {
      justify-content: flex-start;
      padding-left: 4px;
    }
    .start span {
      margin-left: 7px;
    }
  `;

  private field(width: number, content: unknown = '', cls = '') {
    return html`<div class="field ${cls}" style="width:${width}px">${content}</div>`;
  }

  private tab(name: string, width: number, gap: number, locked = true, active = false) {
    return html`<div class=${classMap({ tab: true, locked, active })} style="width:${width}px">
      ${locked ? html`<calc-icon name="lock"></calc-icon>` : ''}<span style="margin-left:${gap}px">${name}</span>
    </div>`;
  }

  render() {
    const menus = ['File', 'Edit', 'View', 'Insert', 'Format', 'Styles', 'Sheet', 'Data', 'Tools', 'Window', 'Help'];
    return html`
      <div class="menu">
        ${menus.map(m => html`<span>${m}</span>`)}
        <svg class="close" viewBox="0 0 6 6"><path d="M.7 .7l4.600 4.600M5.300 .7L.7 5.300" stroke="#222" stroke-width="1.500" /></svg>
      </div>
      <calc-tools class="standard" .items=${STANDARD}></calc-tools>
      <div class="formatting">
        <div class="combo family"><span>Calibri</span><i></i></div>
        <div class="combo size"><span>11 pt</span><i></i></div>
        <calc-tools .items=${FORMATTING}></calc-tools>
      </div>
      <div class="main">
        <div class="doc">
          <div class="formula">
            <div class="combo namebox"><span>A1</span><i></i></div>
            <span class="fx">fx</span>
            <calc-icon name="sum"></calc-icon>
            <calc-icon class="drop" name="caret"></calc-icon>
            <calc-icon name="equals"></calc-icon>
            <div class="input"></div>
            <div class="expand"></div>
          </div>
          <div class="body">
            <calc-sheet></calc-sheet>
            <div class="vscroll"><div></div></div>
          </div>
          <div class="hscroll"><div></div><b></b></div>
          <div class="tabs">
            <svg class="nav" height="16" viewBox="0 0 62 16" fill="none" stroke="#c9c8c6">
              <path d="M1.500 2.500v11M10.500 3L3.500 8l7 5V9.500h3v-3h-3zM21 5l-5 3 5 3zM27 5l-5 3 5 3zM32 5l5 3-5 3zM38 5l5 3-5 3zM50.500 3l7 5-7 5V9.500h-3v-3h3zM59.500 2.500v11" />
            </svg>
            <calc-icon name="addsheet"></calc-icon>
            ${this.tab('Istruzioni', 57, -6, false)}
            ${this.tab('Parametri', 71, 3)}
            ${this.tab('Inserimento', 82, 5)}
            ${this.tab('Dashboard', 76, 3, true, true)}
          </div>
        </div>
        <div class="side">
          <calc-icon name="menu"></calc-icon>
          <calc-icon name="props"></calc-icon>
          <calc-icon name="styles"></calc-icon>
          <calc-icon name="gallery"></calc-icon>
          <calc-icon name="compass"></calc-icon>
          <span class="fx">fx</span>
          <div class="handle"></div>
        </div>
      </div>
      <div class="status">
        ${this.field(180, html`<calc-icon name="disk"></calc-icon><span>Sheet 4 of 4</span>`, 'start')}
        ${this.field(106)}
        ${this.field(317, 'PageStyle_Dashboard')}
        ${this.field(170, 'English (USA)')}
        ${this.field(45)}
        ${this.field(30, svg`<svg width="22" height="13" fill="none"><path d="M1.500 3.500h11v6h-11z" fill="#fff" stroke="#4a9bd4"/><path d="M15 1.500h4M15 11.500h4M17 1.500v10" stroke="#333"/></svg>`)}
        ${this.field(20)}
        ${this.field(20)}
        ${this.field(184, 'Average: ; Sum: 0')}
        ${this.field(97, svg`<svg width="88" height="13" fill="none"><path d="M1 6.500h7M80 6.500h7M83.500 3v7" stroke="#222" stroke-width="1.500"/><path d="M12 6.500h65" stroke="#999"/><path d="M40.500 3.500h3v6h-3z" fill="#f6f5f4" stroke="#555"/></svg>`)}
        ${this.field(29, '95%')}
      </div>
    `;
  }
}
